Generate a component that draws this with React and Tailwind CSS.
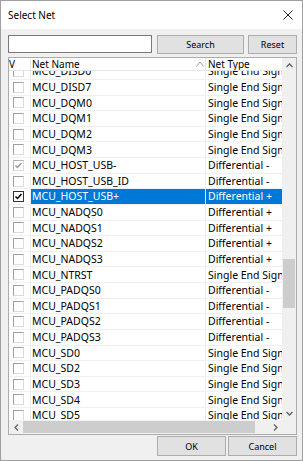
import React from "react";

const SE = "Single End Signal";
const rows = [
  ["MCU_DISD0", SE, 0],
  ["MCU_DISD7", SE, 0],
  ["MCU_DQM0", SE, 0],
  ["MCU_DQM1", SE, 0],
  ["MCU_DQM2", SE, 0],
  ["MCU_DQM3", SE, 0],
  ["MCU_HOST_USB-", "Differential -", 2],
  ["MCU_HOST_USB_ID", "Differential -", 0],
  ["MCU_HOST_USB+", "Differential +", 1],
  ["MCU_NADQS0", "Differential +", 0],
  ["MCU_NADQS1", "Differential +", 0],
  ["MCU_NADQS2", "Differential +", 0],
  ["MCU_NADQS3", "Differential +", 0],
  ["MCU_NTRST", SE, 0],
  ["MCU_PADQS0", "Differential -", 0],
  ["MCU_PADQS1", "Differential -", 0],
  ["MCU_PADQS2", "Differential -", 0],
  ["MCU_PADQS3", "Differential -", 0],
  ["MCU_SD0", SE, 0],
  ["MCU_SD2", SE, 0],
  ["MCU_SD3", SE, 0],
  ["MCU_SD4", SE, 0],
  ["MCU_SD5", SE, 0],
];

function Check({ state }) {
  if (state === 0) {
    return (
      <div className="w-[11px] h-[11px] bg-white border border-t-[#a0a0a0] border-l-[#a0a0a0] border-r-[#dcdcdc] border-b-[#dcdcdc]" />
    );
  }
  const c = state === 1 ? "#000000" : "#9a9a9a";
  return (
    <div
      className={
        state === 1
          ? "w-[11px] h-[11px] bg-white border border-[#333333] flex items-center justify-center"
          : "w-[11px] h-[11px] bg-white border border-t-[#b4b4b4] border-l-[#b4b4b4] border-r-[#dcdcdc] border-b-[#dcdcdc] flex items-center justify-center"
      }
    >
      <svg width="9" height="9" viewBox="0 0 9 9">
        <path d="M1.5 4.5 L3.5 6.5 L7.5 2" fill="none" stroke={c} strokeWidth="1.5" />
      </svg>
    </div>
  );
}

function Chevron({ dir }) {
  const paths = {
    up: "M0.5 4 L3.5 1 L6.5 4",
    down: "M0.5 1 L3.5 4 L6.5 1",
    left: "M4 0.5 L1 3.5 L4 6.5",
    right: "M1 0.5 L4 3.5 L1 6.5",
  };
  const vert = dir === "up" || dir === "down";
  return (
    <svg width={vert ? 7 : 5} height={vert ? 5 : 7} viewBox={vert ? "0 0 7 5" : "0 0 5 7"}>
      <path d={paths[dir]} fill="none" stroke="#606060" strokeWidth="1.3" />
    </svg>
  );
}

export default function App() {
  return (
    <div className="w-[303px] h-[461px] bg-[#f0f0f0] border border-[#a0a0a0] flex flex-col font-['Noto_Sans',sans-serif] text-black overflow-hidden">
      {/* title bar */}
      <div className="h-[28px] bg-white flex items-center justify-between pl-[7px] pr-[9px]">
        <span className="text-[10px] leading-none">Select Net</span>
        <svg width="10" height="10" viewBox="0 0 10 10">
          <path d="M0.5 0.5 L9.5 9.5 M9.5 0.5 L0.5 9.5" stroke="#222" strokeWidth="1" fill="none" />
        </svg>
      </div>

      <div className="flex flex-col pl-[7px] pr-[5px] pt-[6px]">
        {/* search row */}
        <div className="flex items-start h-[19px]">
          <div className="w-[144px] h-[18px] bg-white border border-[#7a7a7a]" />
          <button className="ml-[5px] w-[87px] h-[19px] bg-[#e1e1e1] border border-[#adadad] text-[9px] leading-none flex items-center justify-center">
            Search
          </button>
          <button className="ml-[4px] w-[49px] h-[19px] bg-[#e1e1e1] border border-[#adadad] text-[9px] leading-none flex items-center justify-center">
            Reset
          </button>
        </div>

        {/* table */}
        <div className="mt-[3px] w-[289px] h-[378px] border border-[#adadad] bg-white grid grid-cols-[273px_14px] grid-rows-[362px_14px]">
          <div className="flex flex-col overflow-hidden">
            {/* header */}
            <div className="h-[13px] flex bg-white text-[10px] leading-none shrink-0 relative z-10 border-b border-[#e5e5e5]">
              <div className="w-[21px] flex items-center pl-[0px]">V</div>
              <div className="w-[175px] border-l border-[#e5e5e5] flex items-center justify-between pl-[1px] pr-[1px]">
                <span>Net Name</span>
                <svg width="8" height="6" viewBox="0 0 8 6">
                  <path d="M0.5 5.5 L4 1 L7.5 5.5" fill="none" stroke="#a0a0a0" strokeWidth="1" />
                </svg>
              </div>
              <div className="flex-1 border-l border-[#e5e5e5] flex items-center pl-[2px] whitespace-nowrap overflow-hidden">
                Net Type
              </div>
            </div>
            {/* viewport */}
            <div className="flex-1 overflow-hidden">
              <div className="-mt-[6.7px]">
                {rows.map(([name, type, st], i) => {
                  const sel = st === 1;
                  return (
                    <div key={i} className="h-[15.63px] flex text-[10.5px] leading-none border-b border-[#f0f0f0]">
                      <div className="w-[21px] flex items-center pl-[4px]">
                        <Check state={st} />
                      </div>
                      <div
                        className={
                          "w-[175px] border-l border-[#ececec] flex items-center pl-[1px] whitespace-nowrap " +
                          (sel ? "bg-[#0078d7] text-white" : "")
                        }
                      >
                        {name}
                      </div>
                      <div
                        className={
                          "flex-1 border-l border-[#ececec] flex items-center pl-[2px] whitespace-nowrap overflow-hidden " +
                          (sel ? "bg-[#0078d7] text-white" : "")
                        }
                      >
                        {type}
                      </div>
                    </div>
                  );
                })}
              </div>
            </div>
          </div>

          {/* vertical scrollbar */}
          <div className="bg-[#f0f0f0] flex flex-col">
            <div className="h-[14px] flex items-center justify-center">
              <Chevron dir="up" />
            </div>
            <div className="flex-1">
              <div className="mt-[187px] ml-[1px] w-[12px] h-[49px] bg-[#cdcdcd]" />
            </div>
            <div className="h-[14px] flex items-center justify-center">
              <Chevron dir="down" />
            </div>
          </div>

          {/* horizontal scrollbar */}
          <div className="bg-[#f0f0f0] flex">
            <div className="w-[14px] flex items-center justify-center">
              <Chevron dir="left" />
            </div>
            <div className="flex-1 py-[1px]">
              <div className="w-[232px] h-full bg-[#cdcdcd]" />
            </div>
            <div className="w-[14px] flex items-center justify-center">
              <Chevron dir="right" />
            </div>
          </div>
          <div className="bg-[#f0f0f0]" />
        </div>

        {/* bottom buttons */}
        <div className="mt-[1px] flex justify-end gap-[2px]">
          <button className="w-[69px] h-[20px] bg-[#e1e1e1] border border-[#adadad] text-[9px] leading-none flex items-center justify-center">
            OK
          </button>
          <button className="w-[69px] h-[20px] bg-[#e1e1e1] border border-[#adadad] text-[9px] leading-none flex items-center justify-center">
            Cancel
          </button>
        </div>
      </div>
    </div>
  );
}
